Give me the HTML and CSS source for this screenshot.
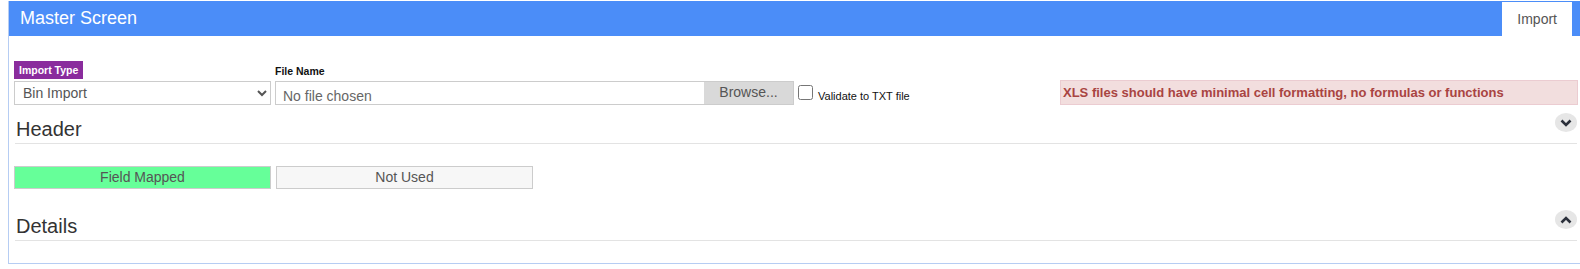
FILE: index.html
```html
<!DOCTYPE html>
<html lang="en">

<head>
    <meta charset="UTF-8">
    <title>Master Screen</title>
    <link rel="stylesheet" href="styles.css">
</head>

<body>

    <!-- Import panel -->
    <div class="panel">
        <div class="panel-heading">
            <span class="panel-title">Master Screen</span>
            <ul class="tabs">
                <li class="tab active">Import</li>
            </ul>
        </div>

        <div class="panel-body">
            <div class="import-row">
                <div class="field field-type">
                    <span class="type-label">Import Type</span>
                    <select class="type-select">
                        <option>Bin Import</option>
                        <option>Item Import</option>
                    </select>
                </div>

                <div class="field field-file">
                    <label class="file-label">File Name</label>
                    <div class="file-input">
                        <span class="file-text">No file chosen</span>
                        <span class="browse">Browse...</span>
                    </div>
                </div>

                <label class="validate"><input type="checkbox" class="validate-box">Validate to TXT file</label>

                <div class="alert">XLS files should have minimal cell formatting, no formulas or functions</div>
            </div>

            <!-- Header section -->
            <div class="section">
                <h3 class="section-title">Header</h3>
                <span class="toggle">
                    <svg width="12" height="8" viewBox="0 0 12 8">
                        <polyline points="1.5,1.5 6,6 10.5,1.5" fill="none" stroke="#2a2f3a" stroke-width="2.6" />
                    </svg>
                </span>
            </div>

            <div class="legend">
                <div class="legend-item mapped">Field Mapped</div>
                <div class="legend-item unused">Not Used</div>
            </div>

            <!-- Details section -->
            <div class="section">
                <h3 class="section-title">Details</h3>
                <span class="toggle">
                    <svg width="12" height="8" viewBox="0 0 12 8">
                        <polyline points="1.5,6.5 6,2 10.5,6.5" fill="none" stroke="#2a2f3a" stroke-width="2.6" />
                    </svg>
                </span>
            </div>
        </div>
    </div>

</body>

</html>
```

FILE: styles.css
```css
/* General body styling */
body,
html {
    margin: 0;
    padding: 0;
    background-color: white;
    font-family: "Liberation Sans", Arial, sans-serif;
    overflow: hidden;
}

/* Panel */
.panel {
    margin: 1px 0 0 8px;
    border: 1px solid #b6cdf3;
    border-top: none;
    border-right: none;
}

.panel-heading {
    display: flex;
    justify-content: space-between;
    height: 35px;
    background-color: #4b8df8;
}

.panel-title {
    padding-left: 11px;
    font-size: 18px;
    line-height: 35px;
    color: white;
}

.tabs {
    display: flex;
    margin: 0 8px 0 0;
    padding: 0;
    list-style: none;
}

.tab {
    margin-top: 1px;
    padding: 0 15px;
    font-size: 14px;
    line-height: 34px;
    color: #555;
}

.tab.active {
    background-color: white;
}

.panel-body {
    padding: 24px 2px 22px 5px;
}

/* Import row */
.import-row {
    display: flex;
    align-items: flex-end;
}

.field-type {
    width: 257px;
}

.type-label {
    display: inline-block;
    padding: 0 5px;
    margin-bottom: 2px;
    font-size: 10.5px;
    font-weight: bold;
    line-height: 18px;
    color: white;
    background-color: #8a2c9d;
}

.type-select {
    display: block;
    width: 257px;
    height: 24px;
    padding: 0 4px;
    font-family: "Liberation Sans", Arial, sans-serif;
    font-size: 14px;
    color: #555;
    background-color: white;
    border: 1px solid #cccccc;
    border-radius: 0;
}

.field-file {
    width: 519px;
    margin-left: 4px;
}

.file-label {
    display: block;
    margin-bottom: 4px;
    font-size: 10.5px;
    font-weight: bold;
    line-height: 12px;
    color: #111;
}

.file-input {
    display: flex;
    height: 22px;
    border: 1px solid #cccccc;
}

.file-text {
    flex: 1;
    padding: 5px 0 0 7px;
    font-size: 14px;
    line-height: 18px;
    color: #666;
}

.browse {
    width: 89px;
    font-size: 14px;
    line-height: 21px;
    text-align: center;
    color: #555;
    background-color: #d9d9d9;
}

.validate {
    margin: 0 0 3px 4px;
    font-size: 11px;
    color: #111;
}

.validate-box {
    width: 15px;
    height: 15px;
    margin: 0 5px 0 0;
    vertical-align: baseline;
}

.alert {
    width: 514px;
    margin-left: auto;
    padding: 0 0 0 2px;
    font-size: 13px;
    font-weight: bold;
    line-height: 23px;
    color: #a94442;
    background-color: #f2dede;
    border: 1px solid #ebccd1;
}

/* Collapsible sections */
.section {
    display: flex;
    justify-content: space-between;
    align-items: flex-start;
    margin: 8px 1px 0 1px;
    border-bottom: 1px solid #e3e3e3;
}

.section-title {
    margin: 5px 0 3px 1px;
    font-size: 20px;
    font-weight: normal;
    line-height: 22px;
    color: #333;
}

.toggle {
    display: flex;
    justify-content: center;
    align-items: center;
    width: 22px;
    height: 19px;
    border-radius: 50%;
    background-color: #e6e6e6;
}

/* Legend */
.legend {
    display: flex;
    gap: 5px;
    margin: 22px 0 21px 0;
}

.legend-item {
    width: 255px;
    font-size: 14px;
    line-height: 21px;
    text-align: center;
    color: #555;
    border: 1px solid #cccccc;
}

.mapped {
    background-color: #66ff99;
}

.unused {
    background-color: #f7f7f7;
}

.legend + .section {
    margin-top: 0;
}
```
